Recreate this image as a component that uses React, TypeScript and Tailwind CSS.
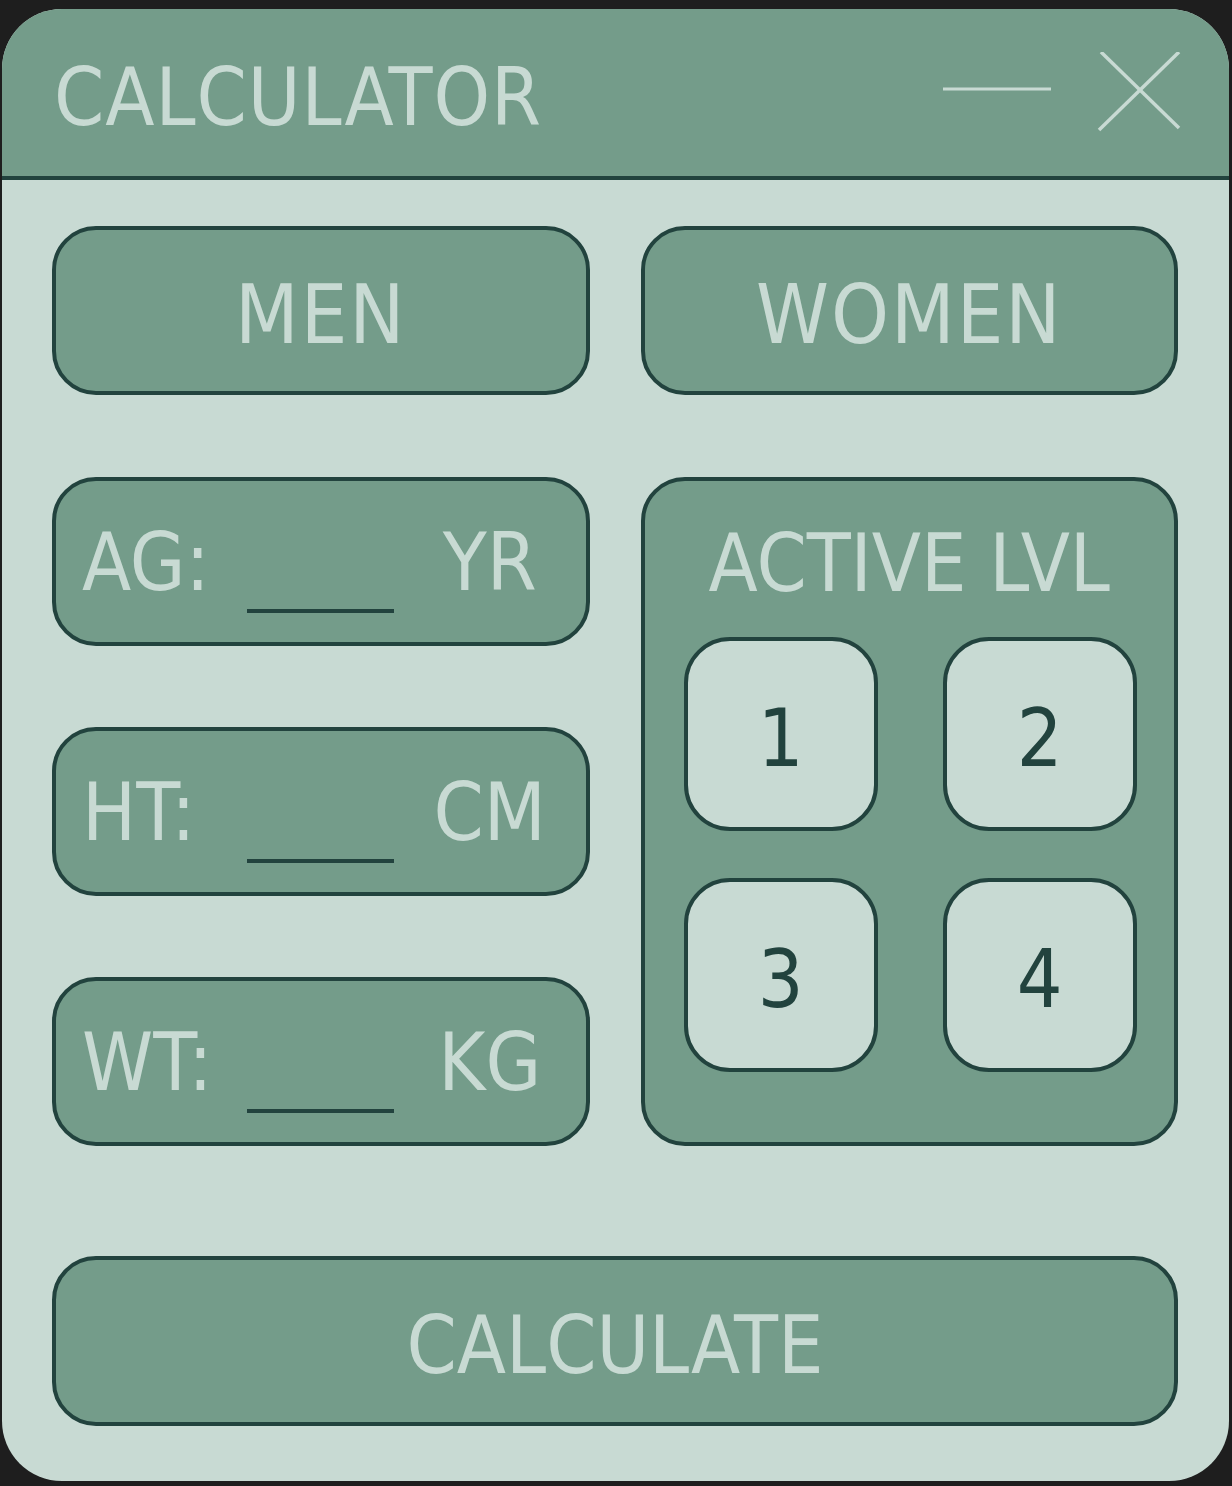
import React from "react";

const font = { fontFamily: '"DejaVu Sans", sans-serif', fontStretch: "condensed" } as React.CSSProperties;

function Field({ label, unit }: { label: string; unit: string }) {
  return (
    <div className="h-[169px] rounded-[44px] border-4 border-[#22433e] bg-[#749c8a] flex items-center text-[#c8dad3] text-[80px] leading-none">
      <div className="w-[191px] pl-[26px] pt-[2px]">{label}</div>
      <div className="w-[147px] h-[4px] bg-[#22433e] mt-[98px]" />
      <div className="flex-1 text-center pt-[2px]">{unit}</div>
    </div>
  );
}

function Lvl({ n }: { n: string }) {
  return (
    <div className="w-[194px] h-[194px] rounded-[46px] border-4 border-[#22433e] bg-[#c8dad3] flex items-center justify-center text-[#22433e] text-[80px] leading-none pt-[10px]">
      {n}
    </div>
  );
}

export default function App() {
  return (
    <div className="w-[1232px] h-[1486px] bg-[#1e1e1e] pt-[9px] pl-[2px]" style={font}>
      <div className="w-[1227px] h-[1472px] rounded-[60px] overflow-hidden bg-[#c8dad3] flex flex-col">
        <div className="h-[171px] bg-[#749c8a] border-b-4 border-[#22433e] flex items-center pl-[52px] pr-[46px] shrink-0">
          <div className="text-[80px] leading-none text-[#c8dad3] tracking-[1px] pt-[10px]">CALCULATOR</div>
          <div className="flex-1" />
          <svg width="240" height="90" viewBox="0 0 240 90" className="mt-[8px]">
            <line x1="0" y1="37" x2="108" y2="37" stroke="#c8dad3" strokeWidth="3" />
            <line x1="158" y1="0" x2="236" y2="76" stroke="#c8dad3" strokeWidth="3.5" />
            <line x1="236" y1="0" x2="156" y2="78" stroke="#c8dad3" strokeWidth="3.5" />
          </svg>
        </div>
        <div className="flex-1 pt-[46px] pl-[50px] pr-[51px]">
          <div className="grid grid-cols-2 gap-x-[51px]">
            <div className="h-[169px] rounded-[44px] border-4 border-[#22433e] bg-[#749c8a] flex items-center justify-center text-[#c8dad3] text-[82px] leading-none tracking-[2px] pt-[8px]">
              MEN
            </div>
            <div className="h-[169px] rounded-[44px] border-4 border-[#22433e] bg-[#749c8a] flex items-center justify-center text-[#c8dad3] text-[82px] leading-none tracking-[2px] pt-[8px]">
              WOMEN
            </div>
          </div>
          <div className="grid grid-cols-2 gap-x-[51px] mt-[82px]">
            <div className="flex flex-col gap-[81px]">
              <Field label="AG:" unit="YR" />
              <Field label="HT:" unit="CM" />
              <Field label="WT:" unit="KG" />
            </div>
            <div className="rounded-[44px] border-4 border-[#22433e] bg-[#749c8a] flex flex-col items-center">
              <div className="text-[80px] leading-none text-[#c8dad3] mt-[43px]">ACTIVE LVL</div>
              <div className="grid grid-cols-2 gap-x-[65px] gap-y-[47px] mt-[33px] ml-[2px]">
                <Lvl n="1" />
                <Lvl n="2" />
                <Lvl n="3" />
                <Lvl n="4" />
              </div>
            </div>
          </div>
          <div className="mt-[110px] h-[170px] rounded-[44px] border-4 border-[#22433e] bg-[#749c8a] flex items-center justify-center text-[#c8dad3] text-[80px] leading-none pt-[10px]">
            CALCULATE
          </div>
        </div>
      </div>
    </div>
  );
}
